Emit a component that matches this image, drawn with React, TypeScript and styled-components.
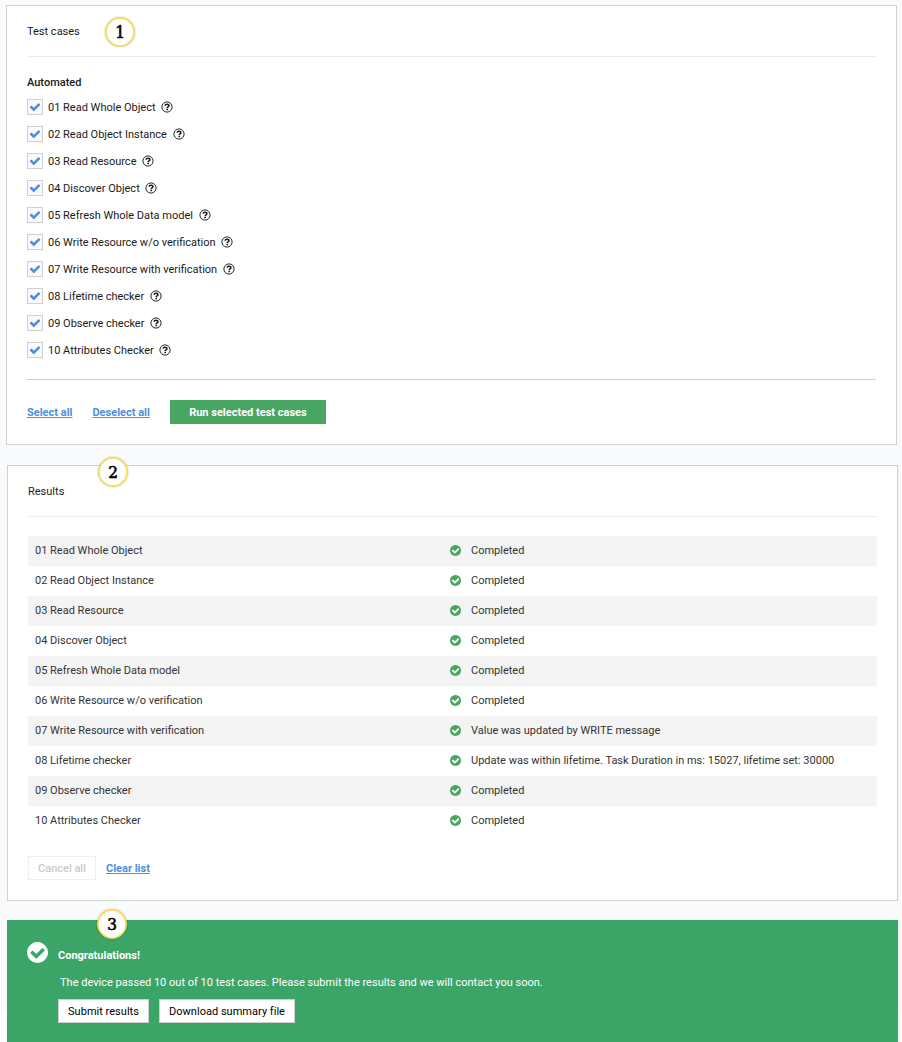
import React from "react";
import styled, { createGlobalStyle } from "styled-components";

const GlobalStyle = createGlobalStyle`
  * { box-sizing: border-box; }
  body {
    margin: 0;
    background: #f8fafc;
    color: #1a1a1a;
    font: 11px/16px Roboto, "Liberation Sans", sans-serif;
  }
`;

const Page = styled.main`
  display: flex;
  flex-direction: column;
  gap: 20px;
  width: 902px;
  height: 1042px;
  padding: 5px 4px 0 6px;
  overflow: hidden;
  background: linear-gradient(#f8fafc 1013px, #fff 1013px);
`;

const Panel = styled.section<{ $height: number; $shifted?: boolean }>`
  position: relative;
  flex: none;
  width: 891px;
  height: ${(p) => p.$height}px;
  margin-left: ${(p) => (p.$shifted ? 1 : 0)}px;
  padding: 0 20px;
  background: #fff;
  border: 1px solid #d0d0d0;
  box-shadow: ${(p) => (p.$shifted ? "1px 0 0 #f2f2f3" : "none")};
`;

const PanelTitle = styled.h2`
  height: 51px;
  margin: 0;
  padding-top: 18px;
  border-bottom: 1px solid #ececec;
  font-size: 11px;
  font-weight: 400;
  line-height: 16px;
`;

const GroupTitle = styled.h3`
  margin: 18px 0 8px;
  font-size: 11px;
  font-weight: 500;
  line-height: 16px;
`;

const CaseList = styled.ul`
  display: flex;
  flex-direction: column;
  gap: 11px;
  margin: 0;
  padding: 0 0 21px;
  border-bottom: 1px solid #d0d0d0;
  list-style: none;
`;

const CaseItem = styled.li`
  display: flex;
  align-items: center;
  height: 16px;
`;

const CaseName = styled.span`
  line-height: 16px;
  padding-top: 2px;
`;

const Checkbox = styled.span`
  display: flex;
  align-items: center;
  justify-content: center;
  width: 16px;
  height: 16px;
  margin-right: 5px;
  padding-bottom: 1px;
  border: 1px solid #d0d0d0;
  background: #fafafa;
  color: #4a90e2;
`;

const Icon = styled.svg<{ $size: number }>`
  display: block;
  flex: none;
  width: ${(p) => p.$size}px;
  height: ${(p) => p.$size}px;
  fill: currentColor;
`;

const Help = styled.span`
  display: flex;
  margin-left: 5.7px;
`;

const Actions = styled.div`
  display: flex;
  align-items: center;
  gap: 20px;
  margin-top: 20px;
`;

const ResultActions = styled(Actions)`
  gap: 10px;
`;

const LinkButton = styled.a`
  padding-top: 1px;
  color: #4a90e2;
  font-weight: 700;
  line-height: 17px;
  text-decoration: underline;
`;

const Button = styled.button<{ $kind: "primary" | "disabled" | "light"; $width: number }>`
  width: ${(p) => p.$width}px;
  height: 24px;
  padding: 2px 0 0;
  font: inherit;
  white-space: nowrap;
  font-weight: ${(p) => ({ primary: 700, disabled: 500, light: 400 })[p.$kind]};
  letter-spacing: ${(p) => (p.$kind === "light" ? "0.02px" : "normal")};
  color: ${(p) => ({ primary: "#fff", disabled: "#c9c9c9", light: "#000" })[p.$kind]};
  background: ${(p) => (p.$kind === "primary" ? "#48a662" : "#fff")};
  border: ${(p) => ({ primary: "0", disabled: "1px solid #f0f0f0", light: "1px solid #d0d0d0" })[p.$kind]};
`;

const ResultRow = styled.div`
  display: grid;
  grid-template-columns: 415px 21px 1fr;
  align-items: center;
  height: 30px;
  padding: 0 7px;
  color: #333;
  &:nth-child(odd) { background: #f4f4f4; }
`;

const Results = styled.div`
  margin-top: 19px;
`;

const StatusIcon = styled.span`
  padding-bottom: 1px;
  color: #48a662;
`;

const Banner = styled.section`
  position: relative;
  display: grid;
  grid-template-columns: 31px 1fr;
  flex: none;
  align-items: start;
  width: 891px;
  height: 122px;
  margin: -1px 0 0 1px;
  padding: 22px 20px 0;
  background: #3ba567;
  box-shadow: 2px 0 0 #f0f0f0;
  color: #fff;
`;

const BannerTitle = styled.h2`
  margin: 5px 0 11px;
  padding-top: 1px;
  font-size: 11px;
  font-weight: 700;
  line-height: 16px;
`;

const BannerText = styled.p`
  margin: 0 0 8px 2px;
  font-weight: 400;
  letter-spacing: 0.01px;
`;

const ButtonRow = styled.div`
  display: flex;
  gap: 10px;
`;

const StepBadge = styled.span<{ $x: number; $y: number }>`
  position: absolute;
  left: ${(p) => p.$x}px;
  top: ${(p) => p.$y}px;
  width: 30px;
  height: 30px;
  border: 1px solid #f9d949;
  border-radius: 50%;
  background: #fff;
  box-shadow: inset 0 0 0 0.8px #f9d949, 0 0 2px rgba(0, 0, 0, 0.25);
  color: #000;
  font: 400 17px/28px "DejaVu Serif Condensed", "DejaVu Serif", serif;
  font-stretch: condensed;
  -webkit-text-stroke: 0.6px #000;
  text-align: center;
`;

const cases = [
  { name: "01 Read Whole Object", result: "Completed" },
  { name: "02 Read Object Instance", result: "Completed" },
  { name: "03 Read Resource", result: "Completed" },
  { name: "04 Discover Object", result: "Completed" },
  { name: "05 Refresh Whole Data model", result: "Completed" },
  { name: "06 Write Resource w/o verification", result: "Completed" },
  { name: "07 Write Resource with verification", result: "Value was updated by WRITE message" },
  {
    name: "08 Lifetime checker",
    result: "Update was within lifetime. Task Duration in ms: 15027, lifetime set: 30000",
  },
  { name: "09 Observe checker", result: "Completed" },
  { name: "10 Attributes Checker", result: "Completed" },
];

const CheckIcon = ({ size }: { size: number }) => (
  <Icon $size={size} viewBox="0 0 1792 1792">
    <path d="M1671 566q0 40-28 68l-724 724-136 136q-28 28-68 28t-68-28l-136-136-362-362q-28-28-28-68t28-68l136-136q28-28 68-28t68 28l294 295 656-657q28-28 68-28t68 28l136 136q28 28 28 68z" />
  </Icon>
);

const CheckCircleIcon = ({ size }: { size: number }) => (
  <Icon $size={size} viewBox="128 128 1536 1536">
    <path d="M1412 734q0-28-18-46l-91-90q-19-19-45-19t-45 19l-408 407-226-226q-19-19-45-19t-45 19l-91 90q-18 18-18 46 0 27 18 45l362 362q19 19 45 19 27 0 46-19l543-543q18-18 18-45zm252 162q0 209-103 385.5t-279.5 279.5-385.5 103-385.5-103-279.5-279.5-103-385.5 103-385.5 279.5-279.5 385.5-103 385.5 103 279.5 279.5 103 385.5z" />
  </Icon>
);

const HelpIcon = () => (
  <Icon $size={12} viewBox="0 0 12 12">
    <circle cx="6" cy="6" r="5.1" fill="none" stroke="currentColor" strokeWidth="0.95" />
    <path
      d="M4.1 4.8C4.2 3.6 5 3.2 6 3.2s1.9.5 1.9 1.5c0 1.2-1.7 1.2-1.7 2.4"
      fill="none"
      stroke="currentColor"
      strokeWidth="1.5"
    />
    <rect x="5.4" y="7.7" width="1.6" height="1.5" />
  </Icon>
);

export default function App() {
  return (
    <Page>
      <GlobalStyle />
      <Panel $height={440}>
        <StepBadge $x={98} $y={11}>1</StepBadge>
        <PanelTitle>Test cases</PanelTitle>
        <GroupTitle>Automated</GroupTitle>
        <CaseList>
          {cases.map((c) => (
            <CaseItem key={c.name}>
              <Checkbox><CheckIcon size={12} /></Checkbox>
              <CaseName>{c.name}</CaseName>
              <Help><HelpIcon /></Help>
            </CaseItem>
          ))}
        </CaseList>
        <Actions>
          <LinkButton>Select all</LinkButton>
          <LinkButton>Deselect all</LinkButton>
          <Button $kind="primary" $width={156}>Run selected test cases</Button>
        </Actions>
      </Panel>
      <Panel $height={436} $shifted>
        <StepBadge $x={90} $y={-9}>2</StepBadge>
        <PanelTitle>Results</PanelTitle>
        <Results>
          {cases.map((c) => (
            <ResultRow key={c.name}>
              <span>{c.name}</span>
              <StatusIcon><CheckCircleIcon size={11} /></StatusIcon>
              <span>{c.result}</span>
            </ResultRow>
          ))}
        </Results>
        <ResultActions>
          <Button $kind="disabled" $width={68}>Cancel all</Button>
          <LinkButton>Clear list</LinkButton>
        </ResultActions>
      </Panel>
      <Banner>
        <StepBadge $x={90} $y={-11}>3</StepBadge>
        <CheckCircleIcon size={21} />
        <div>
          <BannerTitle>Congratulations!</BannerTitle>
          <BannerText>
            The device passed 10 out of 10 test cases. Please submit the results and we will contact you soon.
          </BannerText>
          <ButtonRow>
            <Button $kind="light" $width={91}>Submit results</Button>
            <Button $kind="light" $width={136}>Download summary file</Button>
          </ButtonRow>
        </div>
      </Banner>
    </Page>
  );
}
